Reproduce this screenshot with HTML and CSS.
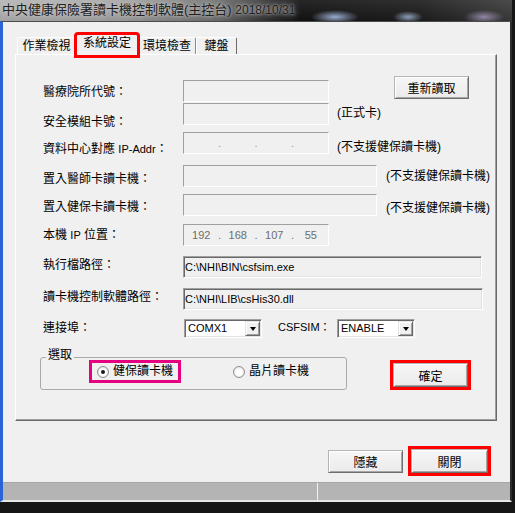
FILE: index.html
```html
<!DOCTYPE html>
<html lang="zh-Hant">
<head>
    <meta charset="UTF-8">
    <meta name="viewport" content="width=device-width, initial-scale=1.0">
    <title>中央健康保險署讀卡機控制軟體(主控台)</title>
    <link rel="stylesheet" href="styles.css">
</head>
<body>
    <div class="window">
        <!-- Title bar -->
        <div class="titlebar">中央健康保險署讀卡機控制軟體(主控台) <span class="date">2018/10/31</span></div>

        <div class="client">
            <!-- Tabs -->
            <div class="tabs">
                <div class="tab t1">作業檢視</div>
                <div class="tab t2 active">系統設定</div>
                <div class="tab t3">環境檢查</div>
                <div class="tab t4">鍵盤</div>
            </div>

            <!-- 系統設定 page -->
            <div class="panel">
                <div class="row">
                    <div class="label l1">醫療院所代號：</div>
                    <div class="box w146"></div>
                    <button class="btn reload">重新讀取</button>
                </div>
                <div class="row r2">
                    <div class="label l2">安全模組卡號：</div>
                    <div class="box w146"></div>
                    <div class="note n2">(正式卡)</div>
                </div>
                <div class="row r3">
                    <div class="label l3">資料中心對應 <span class="en">IP-Addr</span>：</div>
                    <div class="box w146 ip blank">
                        <span class="oct"></span><span class="dot">.</span><span class="oct"></span><span class="dot">.</span><span class="oct"></span><span class="dot">.</span><span class="oct"></span>
                    </div>
                    <div class="note n3">(不支援健保讀卡機)</div>
                </div>
                <div class="row r4">
                    <div class="label l4">置入醫師卡讀卡機：</div>
                    <div class="box w194"></div>
                    <div class="note wide n4">(不支援健保讀卡機)</div>
                </div>
                <div class="row r5">
                    <div class="label l5">置入健保卡讀卡機：</div>
                    <div class="box w194"></div>
                    <div class="note wide n5">(不支援健保讀卡機)</div>
                </div>
                <div class="row r6">
                    <div class="label l6">本機 <span class="en">IP</span> 位置：</div>
                    <div class="box w146 ip">
                        <span class="oct">192</span><span class="dot">.</span><span class="oct">168</span><span class="dot">.</span><span class="oct">107</span><span class="dot">.</span><span class="oct">55</span>
                    </div>
                </div>
                <div class="row r7">
                    <div class="label l7">執行檔路徑：</div>
                    <div class="path w299">C:\NHI\BIN\csfsim.exe</div>
                </div>
                <div class="row r8">
                    <div class="label l7">讀卡機控制軟體路徑：</div>
                    <div class="path w300">C:\NHI\LIB\csHis30.dll</div>
                </div>
                <div class="row r9">
                    <div class="label l7">連接埠：</div>
                    <div class="select"><span class="value">COMX1</span><span class="drop"></span></div>
                    <div class="label csf">CSFSIM：</div>
                    <div class="select"><span class="value">ENABLE</span><span class="drop"></span></div>
                </div>
                <div class="pick">
                    <fieldset class="group">
                        <legend>選取</legend>
                        <div class="options">
                            <div class="opt marked"><span class="radio on"></span>健保讀卡機</div>
                            <div class="opt second"><span class="radio"></span>晶片讀卡機</div>
                        </div>
                    </fieldset>
                    <div class="redbox ok"><button class="btn tall">確定</button></div>
                </div>
            </div>

            <!-- Bottom buttons -->
            <div class="actions">
                <button class="btn">隱藏</button>
                <div class="redbox"><button class="btn tall close">關閉</button></div>
            </div>

            <!-- Status bar -->
            <div class="status">
                <div class="cell first"></div>
                <div class="cell"></div>
            </div>
        </div>
    </div>
</body>
</html>
```

FILE: styles.css
```css
body {
    margin: 0;
    font-family: "Liberation Sans", "Noto Sans CJK TC", sans-serif;
    font-size: 12px;
    color: #000;
    background:
        radial-gradient(ellipse 30px 8px at 330px 512px, rgba(120, 150, 200, 0.35), transparent),
        radial-gradient(ellipse 30px 8px at 420px 512px, rgba(120, 150, 200, 0.3), transparent),
        #161616;
}
.window {
    width: 512px;
}
.titlebar {
    height: 21px;
    line-height: 19px;
    padding-left: 2px;
    font-size: 13px;
    color: #202020;
    white-space: nowrap;
    text-shadow: 0 0 3px #cfcfcf, 0 0 7px #bdbdbd;
    background:
        radial-gradient(ellipse 24px 7px at 335px 17px, rgba(175, 198, 236, 0.85), transparent),
        radial-gradient(ellipse 15px 6px at 408px 17px, rgba(178, 200, 236, 0.75), transparent),
        radial-gradient(ellipse 20px 7px at 484px 17px, rgba(196, 180, 226, 0.65), transparent),
        linear-gradient(180deg, rgba(255, 255, 255, 0.08), rgba(0, 0, 0, 0.1)),
        linear-gradient(90deg, #b6b6b6 0, #a6a6a6 120px, #6c6c6c 220px, #2c2c2c 272px, #141414 300px, #1e1e1e 420px, #3c3c3c 512px);
}
.titlebar .date {
    font-size: 12px;
}
.client {
    box-sizing: border-box;
    height: 481px;
    display: flex;
    flex-direction: column;
    background: #f0f0f0;
    border-top: 1px solid #4a4a4a;
    border-left: 3px solid #2b62d4;
    border-right: 2px solid #2c2c2c;
    border-bottom: 2px solid #e8e8e8;
}

/* tabs */
.tabs {
    display: flex;
    align-items: flex-end;
    height: 22px;
    margin: 12px 0 -2px 14px;
}
.tab {
    box-sizing: border-box;
    height: 19px;
    line-height: 16px;
    text-align: center;
    border: 1px solid;
    border-bottom: 0;
    border-color: #fff #8a8a8a #fff #fff;
    border-radius: 2px 2px 0 0;
    background: #f0f0f0;
}
.t1 { width: 59px; }
.t2 { width: 62px; }
.t3 { width: 58px; }
.t4 { width: 41px; border-right-color: #696969; }
.tab.active {
    height: 22px;
    position: relative;
    z-index: 1;
    outline: 3px solid #f00;
    outline-offset: -1px;
}

/* page */
.panel {
    box-sizing: border-box;
    width: 482px;
    height: 367px;
    margin-left: 12px;
    padding: 25px 0 0 27px;
    background: #f0f0f0;
    border: 1px solid;
    border-color: #fff #696969 #696969 #fff;
    box-shadow: inset -1px -1px 0 #a0a0a0;
}
.row {
    display: flex;
    align-items: flex-start;
    height: 22px;
}
.r2 { margin-top: 1px; }
.r3 { margin-top: 7px; }
.r4 { margin-top: 11px; }
.r5 { margin-top: 7px; }
.r6 { margin-top: 8px; }
.r7 { margin-top: 10px; }
.r8 { margin-top: 10px; }
.r9 { margin-top: 9px; height: 19px; }

.label {
    flex: none;
    width: 140px;
    line-height: 16px;
    white-space: nowrap;
}
.l1 { padding-top: 4px; }
.l2 { padding-top: 11px; }
.l3 { padding-top: 9px; }
.l4 { padding-top: 6px; }
.l5 { padding-top: 5px; }
.l6 { padding-top: 3px; }
.l7 { padding-top: 1px; }
.en {
    font-size: 11px;
}

.box {
    flex: none;
    box-sizing: border-box;
    height: 22px;
    border: 1px solid;
    border-color: #a0a0a0 #fff #fff #a0a0a0;
}
.w146 { width: 146px; }
.w194 { width: 194px; }
.w299 { width: 299px; }
.w300 { width: 300px; }

.ip {
    display: flex;
    padding: 0 1px;
    font-size: 11px;
    line-height: 20px;
    color: #6d6d6d;
}
.ip .oct {
    flex: 1;
    text-align: center;
}
.ip .dot {
    width: 4px;
    text-align: center;
}
.ip.blank {
    color: #9a9a9a;
}

.note {
    margin-left: 8px;
    line-height: 16px;
    white-space: nowrap;
}
.note.wide { margin-left: 9px; }
.n2 { padding-top: 2px; }
.n3 { padding-top: 7px; }
.n4 { padding-top: 3px; }
.n5 { padding-top: 6px; }

.path {
    flex: none;
    box-sizing: border-box;
    height: 22px;
    padding-left: 1px;
    font-size: 11px;
    line-height: 20px;
    white-space: nowrap;
    border: 1px solid;
    border-color: #a0a0a0 #fff #fff #a0a0a0;
    box-shadow: inset 1px 1px 0 #696969, inset -1px -1px 0 #e3e3e3;
}

.select {
    flex: none;
    display: flex;
    box-sizing: border-box;
    width: 78px;
    height: 19px;
    margin-left: 1px;
    padding: 1px;
    background: #fff;
    border: 1px solid;
    border-color: #a0a0a0 #fff #fff #a0a0a0;
    box-shadow: inset 1px 1px 0 #696969, inset -1px -1px 0 #e3e3e3;
}
.select .value {
    flex: 1;
    padding-left: 2px;
    font-size: 11px;
    line-height: 15px;
}
.select .drop {
    box-sizing: border-box;
    width: 15px;
    display: flex;
    align-items: center;
    justify-content: center;
    background: #f0f0f0;
    border: 1px solid;
    border-color: #e3e3e3 #696969 #696969 #e3e3e3;
    box-shadow: inset 1px 1px 0 #fff, inset -1px -1px 0 #a0a0a0;
}
.select .drop::after {
    content: "";
    border-left: 3.5px solid transparent;
    border-right: 3.5px solid transparent;
    border-top: 4px solid #000;
}
.label.csf {
    width: 58px;
    margin-left: 16px;
    font-size: 11px;
}

/* 選取 group */
.pick {
    display: flex;
    align-items: flex-start;
    margin: 9px 0 0 -3px;
}
.group {
    box-sizing: border-box;
    width: 307px;
    min-width: 0;
    margin: 0;
    padding: 0 0 6px 0;
    border: 1px solid #a9a9a9;
    border-radius: 3px;
}
.group legend {
    margin-left: 5px;
    padding: 0 2px 4px;
    line-height: 16px;
}
.options {
    display: flex;
    align-items: center;
    margin: -7px 0 0 48px;
}
.opt {
    display: flex;
    align-items: center;
    gap: 4px;
    height: 17px;
    line-height: 17px;
    padding: 0 5px;
    border: 3px solid transparent;
    white-space: nowrap;
}
.opt.marked {
    border-color: #e4007f;
}
.opt.second {
    margin-left: 44px;
}
.radio {
    box-sizing: border-box;
    width: 12px;
    height: 12px;
    border-radius: 50%;
    border: 1px solid #8e8e8e;
    background: radial-gradient(circle at 50% 55%, #fff 35%, #d6d6d6 100%);
    display: flex;
    align-items: center;
    justify-content: center;
}
.radio.on::after {
    content: "";
    width: 4px;
    height: 4px;
    border-radius: 50%;
    background: #1a1a1a;
}

/* buttons */
.btn {
    box-sizing: border-box;
    width: 75px;
    height: 23px;
    margin: 0;
    padding: 0;
    font-family: inherit;
    font-size: 12px;
    color: #000;
    background: linear-gradient(#f6f6f6, #ebebeb);
    border: 1px solid;
    border-color: #b4b4b4 #6e6e6e #6e6e6e #b4b4b4;
    box-shadow: inset 1px 1px 0 #fff, inset -1px -1px 0 #a6a6a6;
}
.btn.tall { height: 24px; }
.btn.close { width: 77px; }
.btn.reload {
    margin: -4px 0 0 65px;
}
.redbox {
    display: flex;
    border: 3px solid #f00;
}
.redbox.ok {
    margin: 13px 0 0 43px;
}
.actions {
    display: flex;
    align-items: center;
    justify-content: flex-end;
    gap: 5px;
    margin-top: 25px;
    padding-right: 19px;
}

/* status bar */
.status {
    box-sizing: border-box;
    display: flex;
    height: 18px;
    margin-top: auto;
    background: #b4b4b4;
    border-top: 1px solid #a6a6a6;
}
.status .first {
    width: 314px;
    border-right: 1px solid #f2f2f2;
}
```
